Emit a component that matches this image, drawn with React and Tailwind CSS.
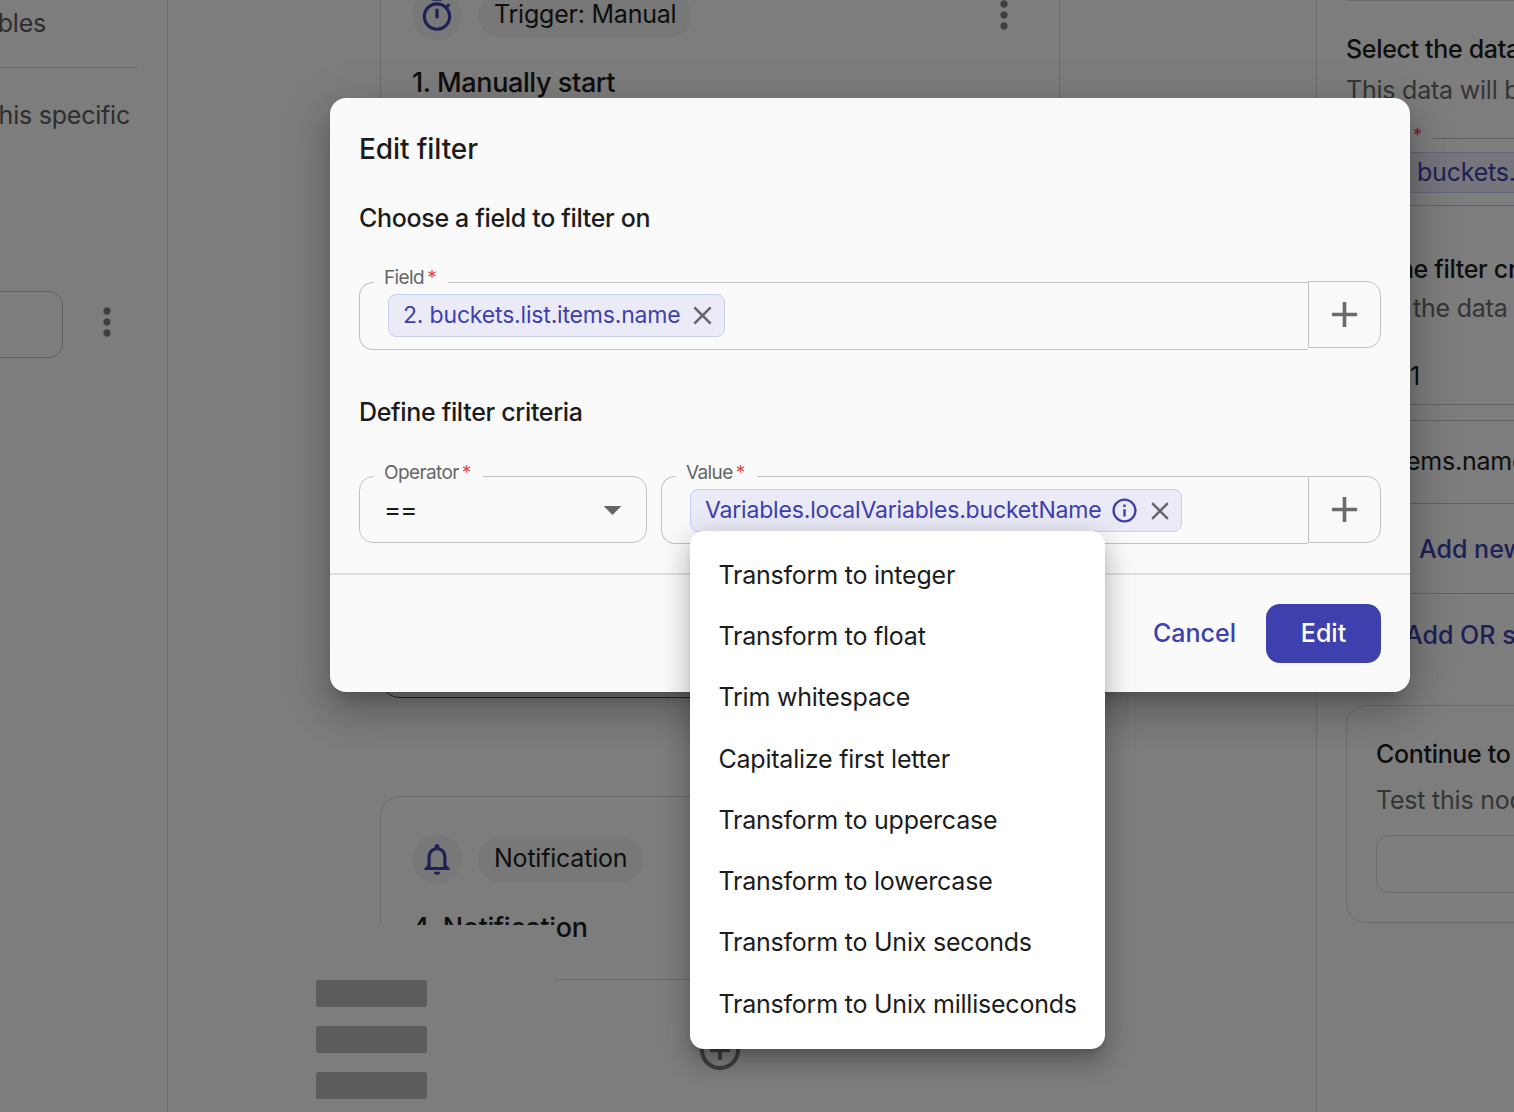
const P = {
  timer: "M15 1H9v2h6V1zm-4 13h2V8h-2v6zm8.03-6.61 1.42-1.42c-.43-.51-.9-.99-1.41-1.41l-1.42 1.42C16.07 4.74 14.12 4 12 4c-4.97 0-9 4.03-9 9s4.02 9 9 9 9-4.03 9-9c0-2.12-.74-4.07-1.97-5.61zM12 20c-3.87 0-7-3.13-7-7s3.13-7 7-7 7 3.13 7 7-3.13 7-7 7z",
  bell: "M12 22c1.1 0 2-.9 2-2h-4c0 1.1.9 2 2 2zm6-6v-5c0-3.07-1.63-5.64-4.5-6.32V4c0-.83-.67-1.5-1.5-1.5s-1.5.67-1.5 1.5v.68C7.64 5.36 6 7.92 6 11v5l-2 2v1h16v-1l-2-2zm-2 1H8v-6c0-2.48 1.51-4.5 4-4.5s4 2.02 4 4.5v6z",
  info: "M11 7h2v2h-2zm0 4h2v6h-2zm1-9C6.48 2 2 6.48 2 12s4.48 10 10 10 10-4.48 10-10S17.52 2 12 2zm0 18c-4.41 0-8-3.59-8-8s3.59-8 8-8 8 3.59 8 8-3.59 8-8 8z",
  close: "M19 6.41 17.59 5 12 10.59 6.41 5 5 6.41 10.59 12 5 17.59 6.41 19 12 13.41 17.59 19 19 17.59 13.41 12z",
  add: "M19 13h-6v6h-2v-6H5v-2h6V5h2v6h6v2z",
  arrow: "M7 10l5 5 5-5z",
  addCircle: "M13 7h-2v4H7v2h4v4h2v-4h4v-2h-4V7zm-1-5C6.48 2 2 6.48 2 12s4.48 10 10 10 10-4.48 10-10S17.52 2 12 2zm0 18c-4.41 0-8-3.59-8-8s3.59-8 8-8 8 3.59 8 8-3.59 8-8 8z",
  more: "M12 8c1.1 0 2-.9 2-2s-.9-2-2-2-2 .9-2 2 .9 2 2 2zm0 2c-1.1 0-2 .9-2 2s.9 2 2 2 2-.9 2-2-.9-2-2-2zm0 6c-1.1 0-2 .9-2 2s.9 2 2 2 2-.9 2-2-.9-2-2-2z",
};

function Icon({ d, className }) {
  return (
    <svg viewBox="0 0 24 24" fill="currentColor" className={className}>
      <path d={d} />
    </svg>
  );
}

function Legend({ label, shift }) {
  return (
    <legend className="ml-[14px] h-0 pl-[10px] pr-[12px] text-[19px] leading-[0] tracking-[-0.6px] text-[#666666]">
      <span className={`block ${shift}`}>
        {label}
        <span className="ml-[3px] text-[#e5483f]">*</span>
      </span>
    </legend>
  );
}

function Chip({ children }) {
  return (
    <div className="flex h-[43px] items-center whitespace-nowrap rounded-lg border border-[#c6cff5] bg-[#eaebf6] pl-[14px] pr-[6px] text-[23px] tracking-[-0.18px] text-[#3d40ad]">
      {children}
    </div>
  );
}

function AddButton({ className }) {
  return (
    <button className={`flex h-[67px] w-[73px] shrink-0 items-center justify-center rounded-r-[14px] border border-[#c2c2c2] text-[#6b6b6b] ${className}`}>
      <Icon d={P.add} className="h-[43px] w-[43px]" />
    </button>
  );
}

function Pill({ children }) {
  return (
    <div className="flex h-[45px] items-center rounded-full bg-[#f0f0f0] px-[16px] text-[25px] tracking-[-0.22px] text-[#1c1c1c]">
      {children}
    </div>
  );
}

function IconBubble({ d }) {
  return (
    <div className="flex h-[50px] w-[50px] items-center justify-center rounded-full bg-[#f0f0f0] text-[#3d40ad]">
      <Icon d={d} className="h-[38px] w-[38px]" />
    </div>
  );
}

const MENU = [
  "Transform to integer",
  "Transform to float",
  "Trim whitespace",
  "Capitalize first letter",
  "Transform to uppercase",
  "Transform to lowercase",
  "Transform to Unix seconds",
  "Transform to Unix milliseconds",
];

function LeftColumn() {
  return (
    <aside className="w-[168px] shrink-0 overflow-hidden border-r border-[#d9d9d9]">
      <div className="-ml-[200px] w-[337px] pt-[5px]">
        <div className="pr-[91px] text-right text-[25px] leading-[36px] tracking-[-0.22px] text-[#5c5c5c]">Variables</div>
        <div className="mt-[26px] border-t border-[#d4d4d4]" />
        <div className="mt-[29px] pr-[7px] text-right text-[25px] leading-[36px] tracking-[-0.22px] text-[#5c5c5c]">this specific</div>
        <div className="mt-[158px] flex w-[360px] items-center">
          <div className="h-[67px] w-[263px] shrink-0 rounded-[14px] border border-[#c2c2c2]" />
          <Icon d={P.more} className="-mt-[6px] ml-[22px] h-[44px] w-[44px] text-[#7f7f7f]" />
        </div>
      </div>
    </aside>
  );
}

function CenterColumn() {
  return (
    <main className="w-[1148px] shrink-0 pl-[212px]">
      <div className="-mt-[37px] h-[300px] w-[680px] rounded-[20px] border border-[#d9d9d9] px-[31px] pt-[26px]">
        <div className="flex items-center gap-[16px]">
          <IconBubble d={P.timer} />
          <Pill>Trigger: Manual</Pill>
          <Icon d={P.more} className="-mt-[1px] ml-auto mr-[2px] h-[44px] w-[44px] text-[#7f7f7f]" />
        </div>
        <div className="mt-[25px] text-[27px] font-medium leading-[36px] tracking-[-0.4px] text-[#1c1c1c]">1. Manually start</div>
      </div>
      <div className="mt-[42px] h-[393px] w-[680px] rounded-[20px] border border-[#3d40ad]" />
      <div className="mt-[98px] h-[184px] w-[680px] rounded-[20px] border border-[#d9d9d9] px-[31px] pt-[37px]">
        <div className="flex items-center gap-[16px]">
          <IconBubble d={P.bell} />
          <Pill>Notification</Pill>
        </div>
        <div className="mt-[26px] text-[27px] font-medium leading-[36px] tracking-[-0.4px] text-[#1c1c1c]">4. Notification</div>
      </div>
      <div className="mt-[46px] flex w-[680px] justify-center">
        <Icon d={P.addCircle} className="h-[48px] w-[48px] text-[#7f7f7f]" />
      </div>
    </main>
  );
}

function RightColumn() {
  return (
    <aside className="min-w-0 flex-1 overflow-hidden pl-[29px]">
      <div className="w-[500px]">
        <div className="border-t border-[#d4d4d4]" />
        <div className="mt-[31px] text-[25px] font-medium leading-[34px] tracking-[-0.33px] text-[#1c1c1c]">Select the data</div>
        <div className="mt-[6px] text-[25px] leading-[36px] tracking-[-0.22px] text-[#6a6a6a]">This data will be used</div>
        <div className="mt-[20px] ml-[67px] flex h-[20px] items-center">
          <span className="-translate-y-[3px] text-[18px] text-[#e5483f]">*</span>
          <div className="ml-[10px] flex-1 border-t border-[#c2c2c2]" />
        </div>
        <div className="mt-[4px] ml-[64px] flex h-[41px] items-center border-y border-[#c6cff5] bg-[#eaebf6] pl-[7px] text-[25px] tracking-[-0.22px] text-[#3d40ad]">
          buckets.list.items.name
        </div>
        <div className="mt-[12px] border-t border-[#c2c2c2]" />
        <div className="mt-[46px] text-[25px] font-medium leading-[34px] tracking-[-0.33px] text-[#1c1c1c]">Set the filter criteria</div>
        <div className="mt-[4px] pl-[67px] text-[25px] leading-[36px] tracking-[-0.22px] text-[#6a6a6a]">the data</div>
        <div className="mt-[32px] pl-[64px] text-[25px] leading-[36px] text-[#1c1c1c]">1</div>
        <div className="mt-[10px] border-t border-[#c2c2c2]" />
        <div className="mt-[15px] border-t border-[#c2c2c2]" />
        <div className="mt-[22px] pl-[60px] text-[25px] leading-[36px] tracking-[-0.22px] text-[#1c1c1c]">ems.name</div>
        <div className="mt-[24px] border-t border-[#c2c2c2]" />
        <div className="mt-[27px] pl-[73px] text-[25px] font-medium leading-[36px] text-[#3d40ad]">Add new</div>
        <div className="mt-[26px] border-t border-[#c2c2c2]" />
        <div className="mt-[23px] pl-[59px] text-[25px] font-medium leading-[36px] text-[#3d40ad]">Add OR section</div>
        <div className="mt-[52px] h-[218px] rounded-[20px] border border-[#d9d9d9] px-[29px] pt-[30px]">
          <div className="text-[25px] font-medium leading-[36px] tracking-[-0.33px] text-[#1c1c1c]">Continue to the next</div>
          <div className="mt-[10px] text-[25px] leading-[36px] tracking-[-0.22px] text-[#6a6a6a]">Test this node</div>
          <div className="mt-[17px] h-[58px] rounded-[14px] border border-[#d4d4d4]" />
        </div>
      </div>
    </aside>
  );
}

function Dialog() {
  return (
    <div className="flex h-[594px] w-[1080px] flex-col rounded-[16px] bg-[#fafafa] shadow-[0_11px_15px_-7px_rgba(0,0,0,0.2),0_24px_38px_3px_rgba(0,0,0,0.14),0_9px_46px_8px_rgba(0,0,0,0.12)]">
      <div className="flex-1 px-[29px] pt-[32px]">
        <h2 className="text-[28px] font-medium leading-[38px] tracking-[-0.1px] text-[#1c1c1c]">Edit filter</h2>
        <h3 className="mt-[33px] text-[25px] font-medium leading-[34px] tracking-[-0.33px] text-[#1c1c1c]">Choose a field to filter on</h3>
        <div className="mt-[47px] flex items-start">
          <fieldset className="h-[68px] w-[949px] rounded-l-[14px] border border-r-0 border-[#c2c2c2]">
            <Legend label="Field" shift="-translate-y-[5px]" />
            <div className="flex pl-[28px] pt-[11px]">
              <Chip>
                2. buckets.list.items.name
                <Icon d={P.close} className="ml-[6px] h-[31px] w-[31px] text-[#666666]" />
              </Chip>
            </div>
          </fieldset>
          <AddButton className="-mt-[1px]" />
        </div>
        <h3 className="mt-[45px] text-[25px] font-medium leading-[34px] tracking-[-0.33px] text-[#1c1c1c]">Define filter criteria</h3>
        <div className="mt-[47px] flex items-start gap-[14px]">
          <fieldset className="h-[67px] w-[288px] rounded-[14px] border border-[#c2c2c2]">
            <Legend label="Operator" shift="-translate-y-[4px]" />
            <div className="flex h-full items-center justify-between pl-[24px] pr-[12px]">
              <span className="text-[26px] tracking-[-1px] text-[#1c1c1c]">==</span>
              <Icon d={P.arrow} className="h-[43px] w-[43px] text-[#666666]" />
            </div>
          </fieldset>
          <div className="flex items-start">
            <fieldset className="h-[68px] w-[647px] rounded-l-[14px] border border-r-0 border-[#c2c2c2]">
              <Legend label="Value" shift="-translate-y-[4px]" />
              <div className="flex pl-[28px] pt-[12px]">
                <Chip>
                  Variables.localVariables.bucketName
                  <Icon d={P.info} className="ml-[9px] h-[29px] w-[29px]" />
                  <Icon d={P.close} className="ml-[6px] h-[30px] w-[30px] text-[#666666]" />
                </Chip>
              </div>
            </fieldset>
            <AddButton className="" />
          </div>
        </div>
      </div>
      <div className="flex h-[119px] items-center justify-end gap-[30px] border-t-2 border-[#dedede] px-[29px]">
        <button className="text-[25px] font-medium text-[#3d40ad]">Cancel</button>
        <button className="flex h-[59px] w-[115px] items-center justify-center rounded-[14px] bg-[#3d40ad] text-[25px] font-medium text-white">
          Edit
        </button>
      </div>
    </div>
  );
}

function Menu() {
  return (
    <div className="absolute left-[690px] top-[531px] w-[415px] rounded-[14px] bg-white py-[14px] shadow-[0_8px_10px_-5px_rgba(0,0,0,0.2),0_16px_24px_2px_rgba(0,0,0,0.14),0_6px_30px_5px_rgba(0,0,0,0.12)]">
      {MENU.map((m) => (
        <div key={m} className="flex h-[61.25px] items-center whitespace-nowrap px-[28.5px] text-[25px] tracking-[-0.22px] text-[#1c1c1c]">
          {m}
        </div>
      ))}
    </div>
  );
}

export default function App() {
  return (
    <div className="relative h-[1112px] w-[1514px] overflow-hidden bg-[#fafafa] font-['Inter',sans-serif]">
      <div className="flex h-full">
        <LeftColumn />
        <CenterColumn />
        <div className="border-l border-[#d9d9d9]" />
        <RightColumn />
      </div>

      {/* floating skeleton panel */}
      <div className="absolute left-[300px] top-[925px] flex h-[187px] w-[255px] flex-col gap-[19px] bg-[#fafafa] px-[16px] pt-[55px]">
        <div className="h-[27px] w-[111px] rounded-[2px] bg-[#b8b8b8]" />
        <div className="h-[27px] w-[111px] rounded-[2px] bg-[#b8b8b8]" />
        <div className="h-[27px] w-[111px] rounded-[2px] bg-[#b8b8b8]" />
      </div>

      {/* backdrop */}
      <div className="absolute inset-0 bg-black/50" />

      <div className="absolute left-[330px] top-[98px]">
        <Dialog />
      </div>
      <Menu />
    </div>
  );
}
